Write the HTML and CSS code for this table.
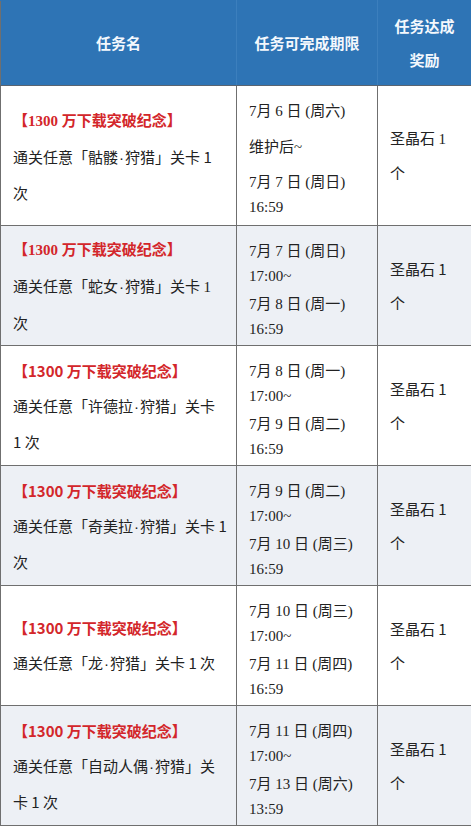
FILE: index.html
```html
<!DOCTYPE html>
<html lang="zh-CN">
<head>
<meta charset="utf-8">
<title>任务</title>
<link rel="stylesheet" href="styles.css">
</head>
<body>
<table class="tasks">
  <colgroup>
    <col class="c-name">
    <col class="c-date">
    <col class="c-reward">
  </colgroup>
  <thead>
    <tr class="head">
      <th>任务名</th>
      <th>任务可完成期限</th>
      <th class="two">任务达成<br>奖励</th>
    </tr>
  </thead>
  <tbody>
    <tr class="r1">
      <td class="name"><span class="red serif-num">【1300 万下载突破纪念】</span><br>通关任意「骷髅<span class="dot">·</span>狩猎」关卡 1<br>次</td>
      <td class="date"><p>7月 6 日 (周六)</p><p class="m11">维护后~</p><p class="m10">7月 7 日 (周日)<br>16:59</p></td>
      <td class="reward">圣晶石 <span class="serif">1</span><br>个</td>
    </tr>
    <tr class="alt">
      <td class="name"><span class="red serif-num">【1300 万下载突破纪念】</span><br>通关任意「蛇女<span class="dot">·</span>狩猎」关卡 <span class="serif">1</span><br>次</td>
      <td class="date"><p>7月 7 日 (周日)<br>17:00~</p><p class="m3">7月 8 日 (周一)<br>16:59</p></td>
      <td class="reward">圣晶石 1<br>个</td>
    </tr>
    <tr>
      <td class="name"><span class="red">【1300 万下载突破纪念】</span><br>通关任意「许德拉<span class="dot">·</span>狩猎」关卡<br>1 次</td>
      <td class="date"><p>7月 8 日 (周一)<br>17:00~</p><p class="m3">7月 9 日 (周二)<br>16:59</p></td>
      <td class="reward">圣晶石 1<br>个</td>
    </tr>
    <tr class="alt">
      <td class="name"><span class="red">【1300 万下载突破纪念】</span><br>通关任意「奇美拉<span class="dot">·</span>狩猎」关卡 1<br>次</td>
      <td class="date"><p>7月 9 日 (周二)<br>17:00~</p><p class="m3">7月 10 日 (周三)<br>16:59</p></td>
      <td class="reward">圣晶石 1<br>个</td>
    </tr>
    <tr>
      <td class="name"><span class="red">【1300 万下载突破纪念】</span><br>通关任意「龙<span class="dot">·</span>狩猎」关卡 1 次</td>
      <td class="date"><p>7月 10 日 (周三)<br>17:00~</p><p class="m3">7月 11 日 (周四)<br>16:59</p></td>
      <td class="reward">圣晶石 1<br>个</td>
    </tr>
    <tr class="alt">
      <td class="name"><span class="red">【1300 万下载突破纪念】</span><br>通关任意「自动人偶<span class="dot">·</span>狩猎」关<br>卡 1 次</td>
      <td class="date"><p>7月 11 日 (周四)<br>17:00~</p><p class="m3">7月 13 日 (周六)<br>13:59</p></td>
      <td class="reward">圣晶石 1<br>个</td>
    </tr>
  </tbody>
</table>
</body>
</html>
```
FILE: styles.css
```css
html, body {
  margin: 0;
  padding: 0;
  background: #ffffff;
}

.tasks {
  width: 471px;
  table-layout: fixed;
  border-collapse: collapse;
  font-family: "Noto Sans CJK SC", "Liberation Sans", sans-serif;
  font-size: 15px;
  color: #222222;
}

.c-name { width: 236px; }
.c-date { width: 141px; }
.c-reward { width: 94px; }

.tasks th,
.tasks td {
  border: 1px solid #6f6f6f;
  vertical-align: middle;
  padding: 0 12px;
  text-align: left;
  white-space: nowrap;
}

.head {
  height: 85px;
}

.head th {
  background: #2e74b5;
  color: #f4f8fd;
  font-weight: bold;
  text-align: center;
  line-height: 34px;
  border-top-color: #2e74b5;
  border-left-color: #3c7fbd;
  border-right-color: #3c7fbd;
  border-bottom-color: #5a6470;
  padding: 0 4px;
}

.head th:first-child { border-left-color: #6f6f6f; }
.head th:last-child { border-right-color: #6f6f6f; }

.r1 { height: 140px; }
tbody tr { height: 120px; }
tbody tr.alt { background: #edf0f5; }

.name {
  line-height: 35px;
}

.dot {
  font-family: "Liberation Sans", sans-serif;
  padding: 0 1px;
}

.red {
  color: #d3262a;
  font-weight: bold;
}

.serif-num,
.serif {
  font-family: "Liberation Serif", "Noto Sans CJK SC", serif;
}

.tasks td.date {
  font-family: "Liberation Serif", "Noto Sans CJK SC", serif;
  line-height: 25px;
  vertical-align: top;
  padding-top: 13px;
}

.date p {
  margin: 0;
}

.date .m3 { margin-top: 3px; }
.date .m10 { margin-top: 10px; }
.date .m11 { margin-top: 11px; }

.reward {
  line-height: 34px;
}
```
